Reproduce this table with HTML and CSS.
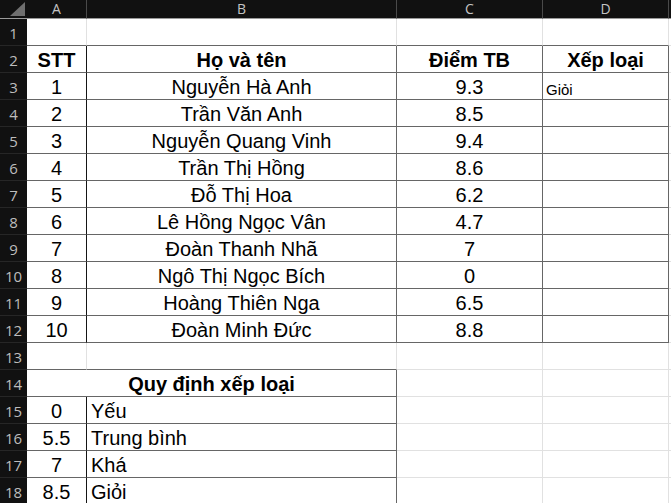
FILE: index.html
```html
<!DOCTYPE html>
<html lang="vi">
<head>
<meta charset="utf-8">
<title>Xếp loại</title>
<link rel="stylesheet" href="styles.css">
</head>
<body>
<div class="sheet">
  <div class="corner"><svg width="27" height="18" viewBox="0 0 27 18"><polygon points="25,2 25,16 10,16" fill="#6f6f6f"/></svg></div>
  <div class="colh">A</div><div class="colh">B</div><div class="colh">C</div><div class="colh">D</div><div class="colh"></div>

  <div class="rh">1</div><div class="c top"></div><div class="c top"></div><div class="c top"></div><div class="c top"></div><div class="c"></div>

  <div class="rh">2</div><div class="c t k hd">STT</div><div class="c t hd">Họ và tên</div><div class="c t hd">Điểm TB</div><div class="c t hd">Xếp loại</div><div class="c"></div>

  <div class="rh">3</div><div class="c t k">1</div><div class="c t">Nguyễn Hà Anh</div><div class="c t">9.3</div><div class="c t sm">Giỏi</div><div class="c"></div>
  <div class="rh">4</div><div class="c t k">2</div><div class="c t">Trần Văn Anh</div><div class="c t">8.5</div><div class="c t"></div><div class="c"></div>
  <div class="rh">5</div><div class="c t k">3</div><div class="c t">Nguyễn Quang Vinh</div><div class="c t">9.4</div><div class="c t"></div><div class="c"></div>
  <div class="rh">6</div><div class="c t k">4</div><div class="c t">Trần Thị Hồng</div><div class="c t">8.6</div><div class="c t"></div><div class="c"></div>
  <div class="rh">7</div><div class="c t k">5</div><div class="c t">Đỗ Thị Hoa</div><div class="c t">6.2</div><div class="c t"></div><div class="c"></div>
  <div class="rh">8</div><div class="c t k">6</div><div class="c t">Lê Hồng Ngọc Vân</div><div class="c t">4.7</div><div class="c t"></div><div class="c"></div>
  <div class="rh">9</div><div class="c t k">7</div><div class="c t">Đoàn Thanh Nhã</div><div class="c t">7</div><div class="c t"></div><div class="c"></div>
  <div class="rh">10</div><div class="c t k">8</div><div class="c t">Ngô Thị Ngọc Bích</div><div class="c t">0</div><div class="c t"></div><div class="c"></div>
  <div class="rh">11</div><div class="c t k">9</div><div class="c t">Hoàng Thiên Nga</div><div class="c t">6.5</div><div class="c t"></div><div class="c"></div>
  <div class="rh">12</div><div class="c t k">10</div><div class="c t">Đoàn Minh Đức</div><div class="c t">8.8</div><div class="c t"></div><div class="c"></div>

  <div class="rh">13</div><div class="c top"></div><div class="c top"></div><div class="c"></div><div class="c"></div><div class="c"></div>

  <div class="rh">14</div><div class="c t hd span2">Quy định xếp loại</div><div class="c"></div><div class="c"></div><div class="c"></div>

  <div class="rh">15</div><div class="c t k">0</div><div class="c t lft">Yếu</div><div class="c"></div><div class="c"></div><div class="c"></div>
  <div class="rh">16</div><div class="c t k">5.5</div><div class="c t lft">Trung bình</div><div class="c"></div><div class="c"></div><div class="c"></div>
  <div class="rh">17</div><div class="c t k">7</div><div class="c t lft">Khá</div><div class="c"></div><div class="c"></div><div class="c"></div>
  <div class="rh">18</div><div class="c t k">8.5</div><div class="c t lft">Giỏi</div><div class="c"></div><div class="c"></div><div class="c"></div>
</div>
</body>
</html>
```

FILE: styles.css
```css
html, body {
  margin: 0;
  padding: 0;
  background: #ffffff;
  overflow: hidden;
}

.sheet {
  display: grid;
  grid-template-columns: 27px 60px 310px 146px 126px 60px;
  grid-template-rows: 19px repeat(18, 27px);
}

.corner {
  background: #111111;
  border-bottom: 1px solid #9a9a9a;
  box-sizing: border-box;
}

.corner svg {
  display: block;
}

.colh {
  box-sizing: border-box;
  background: #111111;
  color: #c4c4c4;
  font-family: "Open Sans", "DejaVu Sans", sans-serif;
  font-size: 14px;
  line-height: 18px;
  text-align: center;
  border-right: 1px solid #4a4a4a;
  border-bottom: 1px solid #9a9a9a;
}

.rh {
  box-sizing: border-box;
  background: #111111;
  color: #bdbdbd;
  font-family: "Open Sans", "DejaVu Sans", sans-serif;
  font-size: 15px;
  line-height: 29px;
  text-align: center;
  border-bottom: 1px solid #262626;
  overflow: hidden;
}

.c {
  box-sizing: border-box;
  border-right: 1px solid #e1e1e1;
  border-bottom: 1px solid #e1e1e1;
  font-family: "Liberation Sans", Arial, sans-serif;
  font-size: 20px;
  line-height: 28px;
  color: #000000;
  text-align: center;
  white-space: nowrap;
}

.top {
  border-bottom-color: #666666;
}

.t {
  border-right-color: #666666;
  border-bottom-color: #666666;
}

.k {
  border-right-color: #151515;
}

.hd {
  font-weight: bold;
}

.span2 {
  grid-column: span 2;
}

.lft {
  text-align: left;
  padding-left: 4px;
}

.sm {
  text-align: left;
  padding-left: 3px;
  font-size: 15px;
  line-height: 33px;
}
```
